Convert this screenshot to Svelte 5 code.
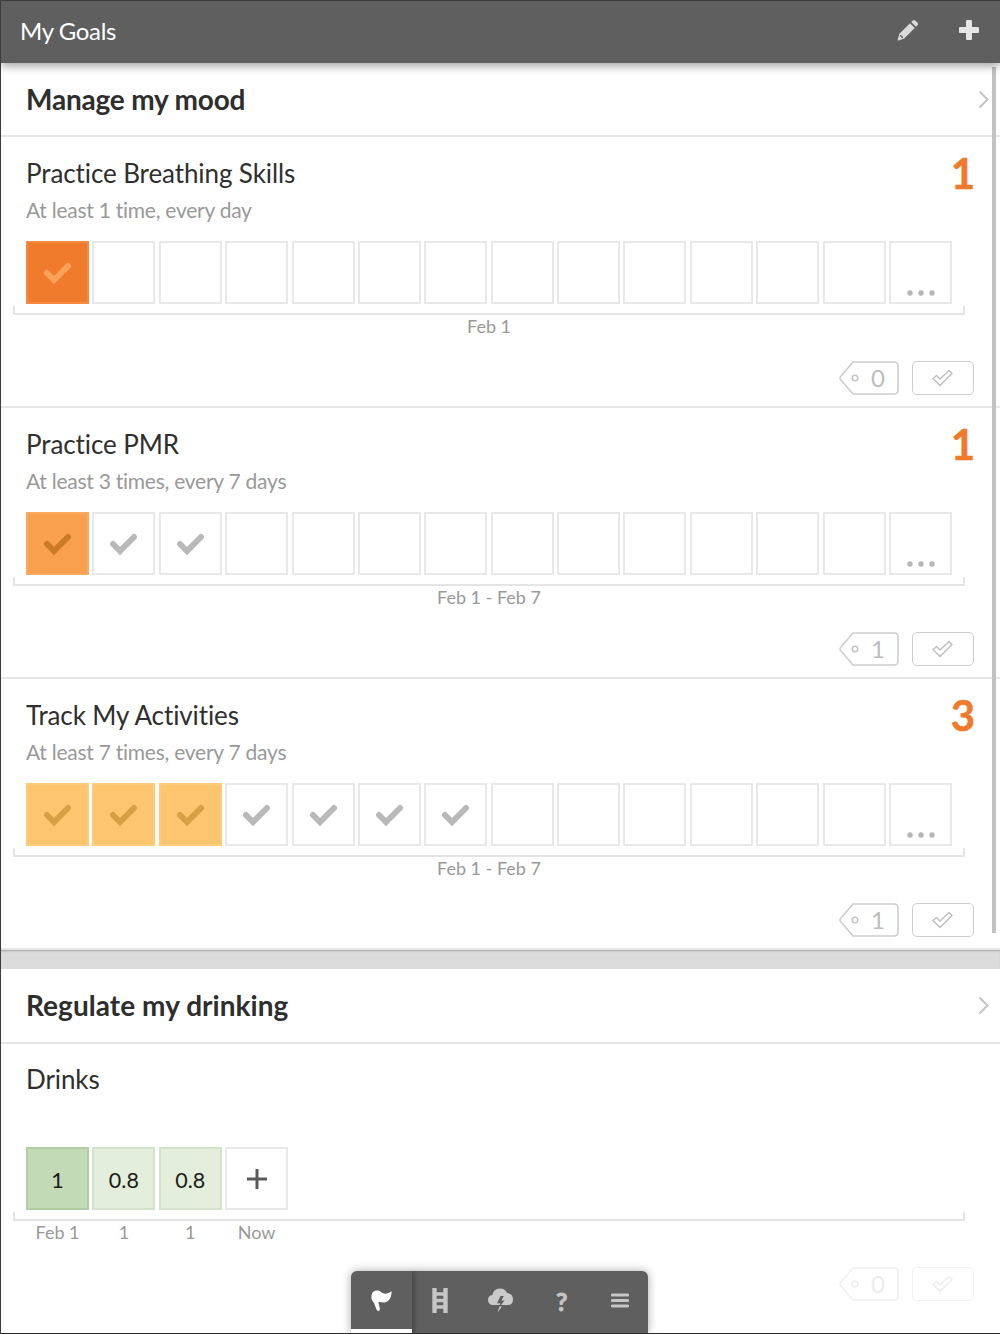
<script>
  const range = (n) => Array.from({ length: n });
  const goals = [
    { title: 'Practice Breathing Skills', sub: 'At least 1 time, every day', num: '1', range: 'Feb 1', tag: '0',
      cells: ['o1', ...range(12).map(() => ''), 'more'] },
    { title: 'Practice PMR', sub: 'At least 3 times, every 7 days', num: '1', range: 'Feb 1 - Feb 7', tag: '1',
      cells: ['o2', 'g', 'g', ...range(10).map(() => ''), 'more'] },
    { title: 'Track My Activities', sub: 'At least 7 times, every 7 days', num: '3', range: 'Feb 1 - Feb 7', tag: '1',
      cells: ['o3', 'o3', 'o3', 'g', 'g', 'g', 'g', ...range(6).map(() => ''), 'more'] }
  ];
  const drinks = [
    { v: '1', c: 'd1', l: 'Feb 1' },
    { v: '0.8', c: 'd2', l: '1' },
    { v: '0.8', c: 'd2', l: '1' },
    { v: '+', c: 'plus', l: 'Now' }
  ];
</script>

{#snippet chevron()}
  <svg class="chev" width="11" height="19" viewBox="0 0 11 19"><path d="M1.5 1.5 L9.5 9.5 L1.5 17.5" fill="none" stroke="#c4c4c4" stroke-width="2"/></svg>
{/snippet}

{#snippet actions(tag)}
  <div class="actions">
    <svg width="60" height="34" viewBox="0 0 60 34">
      <path d="M14 1 H55 Q59 1 59 5 V29 Q59 33 55 33 H14 L2 19 Q0 17 2 15 Z" fill="none" stroke="#cdcdcd" stroke-width="1.6"/>
      <circle cx="16" cy="17" r="2.8" fill="none" stroke="#c4c4c4" stroke-width="1.5"/>
      <text x="39" y="25.5" text-anchor="middle" class="tagnum">{tag}</text>
    </svg>
    <div class="okbtn">
      <svg width="21" height="18" viewBox="0 0 21 18"><path d="M1 9.5 L4.5 6.5 L8 10 L17 1.5 L20 4.5 L8 16.5 Z" fill="none" stroke="#c0c0c0" stroke-width="1.5" stroke-linejoin="round"/></svg>
    </div>
  </div>
{/snippet}

{#snippet cell(c)}
  <div class="cell {c}">
    {#if c === 'more'}
      <svg width="28" height="6" viewBox="0 0 28 6"><circle cx="3" cy="3" r="2.7"/><circle cx="14" cy="3" r="2.7"/><circle cx="25" cy="3" r="2.7"/></svg>
    {:else if c}
      <svg width="29" height="24" viewBox="0 0 29 24"><path d="M4 12 L11 19 L25 5" fill="none" stroke-width="6" stroke-linejoin="miter" stroke-linecap="round"/></svg>
    {/if}
  </div>
{/snippet}

<div class="app">
  <header class="top">
    <span class="top-title">My Goals</span>
    <div class="top-icons">
      <svg width="22" height="22" viewBox="0 0 22 22"><path d="M15.8 1.4 Q17 .5 18.2 1.4 L20.6 3.8 Q21.6 5 20.6 6.2 L19 7.8 L14.2 3 Z M13 4.2 L17.8 9 L7.2 19.6 L1.8 21.4 Q.5 21.7 .7 20.4 L2.4 14.8 Z" fill="#dadada"/><path d="M3.2 16.2 L5.8 18.8" stroke="#5f5f5f" stroke-width="1.3"/></svg>
      <svg width="20" height="20" viewBox="0 0 20 20"><path d="M10 2 V18 M2 10 H18" stroke="#e6e6e6" stroke-width="6" stroke-linecap="round"/></svg>
    </div>
  </header>

  <section class="sec">
    <div class="sec-head"><h2>Manage my mood</h2>{@render chevron()}</div>
    {#each goals as g}
      <article class="card">
        <div class="title-row">
          <h3>{g.title}</h3>
          <span class="num">{g.num}</span>
        </div>
        <p class="sub">{g.sub}</p>
        <div class="cells">
          {#each g.cells as c}{@render cell(c)}{/each}
        </div>
        <div class="axis"></div>
        <div class="range">{g.range}</div>
        {@render actions(g.tag)}
      </article>
    {/each}
  </section>

  <div class="band"></div>

  <section class="sec second">
    <div class="sec-head"><h2>Regulate my drinking</h2>{@render chevron()}</div>
    <article class="card">
      <div class="title-row"><h3>Drinks</h3></div>
      <p class="sub">&nbsp;</p>
      <div class="cells">
        {#each drinks as d}
          <div class="cell {d.c}">
            {#if d.c === 'plus'}
              <svg width="22" height="22" viewBox="0 0 22 22"><path d="M11 1 V21 M1 11 H21" stroke="#5a5a5a" stroke-width="3"/></svg>
            {:else}{d.v}{/if}
          </div>
        {/each}
      </div>
      <div class="axis"></div>
      <div class="cells labels">
        {#each drinks as d}<div class="lab">{d.l}</div>{/each}
      </div>
      <div class="faded">{@render actions('0')}</div>
    </article>
  </section>

  <div class="scrollbar"></div>

  <nav class="tabs">
    <div class="tab active">
      <svg width="21" height="21" viewBox="0 0 21 21"><path d="M.4 6 C1 .4 6.5 -.8 10 2 C13 4.4 16.5 4.2 20.6 1.2 C20.6 7.4 17.8 12.4 12.8 12.4 C10.8 12.4 9.4 11.8 7.4 12.2 L8.9 18.6 Q9.3 20.6 7.6 20.9 Q6 21.1 5.5 19.6 L3 13 Q-.2 10.4 .4 6 Z" fill="#fff"/></svg>
    </div>
    <div class="tab">
      <svg width="16" height="25" viewBox="0 0 16 25"><path d="M2.5 0 V25 M13.5 0 V25" stroke="#c6c6c6" stroke-width="4.4"/><path d="M3 6 H13 M3 12.5 H13 M3 19 H13" stroke="#c6c6c6" stroke-width="3.4"/></svg>
    </div>
    <div class="tab cloud">
      <svg width="25" height="25" viewBox="0 0 25 25"><path d="M5.5 17 Q0 17 0 11.8 Q0 7.5 4.4 7 Q5.5 .5 12 .5 Q17.2 .5 19 5 Q25 5.6 25 11.4 Q25 17 19.5 17 Z" fill="#cacaca"/><path d="M12.5 8 L9 15.2 H12.2 L11 19.5 L16.6 12.6 H13.4 L15.8 8 Z" fill="#5f5f5f"/><path d="M11.6 18.5 L10.6 21 L9.6 24.5 L14 18.5 Z" fill="#cacaca"/></svg>
    </div>
    <div class="tab q">?</div>
    <div class="tab menu">
      <svg width="18" height="15" viewBox="0 0 18 15"><path d="M1.2 2 H16.8 M1.2 7.5 H16.8 M1.2 13 H16.8" stroke="#c6c6c6" stroke-width="3" stroke-linecap="round"/></svg>
    </div>
  </nav>
</div>

<style>
  :global(body) { margin: 0; background: #fff; }
  .app {
    position: relative;
    width: 1000px;
    height: 1334px;
    box-sizing: border-box;
    overflow: hidden;
    background: #fff;
    border-left: 1px solid #3c3c3c;
    border-top: 1px solid #3c3c3c;
    border-bottom: 1px solid #2a2a2a;
    font-family: Lato, "Open Sans", sans-serif;
    color: #2f2f2f;
  }
  .top {
    position: relative;
    z-index: 2;
    height: 62px;
    box-sizing: border-box;
    background: #5f5f5f;
    display: flex;
    align-items: center;
    justify-content: space-between;
    padding: 0 21px 0 19px;
    box-shadow: 0 3px 9px rgba(0, 0, 0, .38);
  }
  .top-title { color: #fff; font-size: 24px; letter-spacing: -.37px; margin-top: -4px; }
  .top-icons { display: flex; align-items: center; gap: 40px; margin-top: -4px; }

  .sec-head {
    height: 72px;
    border-bottom: 2px solid #e6e6e6;
    display: flex;
    align-items: center;
    justify-content: space-between;
    padding: 0 11px 0 25px;
  }
  .second .sec-head { height: 73px; }
  h2 { margin: 0; font-size: 28px; font-weight: 700; color: #2e2e2e; letter-spacing: -.2px; }
  .second h2 { margin-top: -2px; letter-spacing: .05px; }

  .card {
    height: 271px;
    box-sizing: border-box;
    border-bottom: 2px solid #e6e6e6;
    padding: 0 26px 0 25px;
  }
  .second .card { border-bottom: 0; }
  .title-row {
    display: flex;
    justify-content: space-between;
    align-items: center;
    height: 36px;
    padding-top: 18px;
  }
  .second .title-row { padding-top: 17px; }
  .second .sub { margin-top: 6px; }
  h3 { margin: 0; font-size: 26px; font-weight: 400; color: #2f2f2f; line-height: 36px; letter-spacing: -.1px; }
  .num {
    font-size: 42px;
    font-weight: 700;
    color: #f07a2b;
    line-height: 36px;
    -webkit-text-stroke: .5px #f07a2b;
    margin-right: -1px;
  }
  .sub { margin: 5px 0 0; height: 28px; line-height: 28px; font-size: 21px; letter-spacing: -.25px; color: #999; }
  .cells {
    display: grid;
    grid-template-columns: repeat(14, 63px);
    column-gap: 3.38px;
    margin-top: 17px;
  }
  .cell {
    height: 63px;
    box-sizing: border-box;
    border: 2px solid #e8e8e8;
    display: flex;
    align-items: center;
    justify-content: center;
    font-size: 21.5px;
    color: #1c1c1c;
    background: #fff;
  }
  .cell svg path { stroke: #b9b9b9; }
  .o1 { background: #f07b2c; border-color: #f58a42; }
  .o2 { background: #f8a04e; border-color: #f9aa5e; }
  .o3 { background: #fdc56e; border-color: #fdcb7c; }
  .cell.o1 svg path { stroke: #fba25a; }
  .cell.o2 svg path { stroke: #cb7a25; }
  .cell.o3 svg path { stroke: #d8a044; }
  .more { align-items: flex-end; padding-bottom: 6px; }
  .more svg { margin-left: 1px; fill: #b6b6b6; }
  .d1 { background: #c3dab7; border-color: #b0cda4; padding-top: 2px; }
  .d2 { background: #e3eedb; border-color: #d2e3c9; padding-top: 2px; }
  .cell.plus svg path { stroke: #5a5a5a; }

  .second .cells { margin-top: 16px; }
  .axis {
    width: 948px;
    height: 7px;
    margin: 2px 0 0 -13px;
    border: 2px solid #e4e4e4;
    border-top: 0;
  }
  .range {
    width: 952px;
    margin: -1px 0 0 -13px;
    text-align: center;
    font-size: 18px;
    line-height: 24px;
    color: #999;
  }
  .second .labels { margin-top: -1px; }
  .lab { text-align: center; font-size: 18px; line-height: 24px; color: #999; }
  .actions {
    display: flex;
    justify-content: flex-end;
    align-items: center;
    gap: 13px;
    margin-top: 23px;
  }
  .tagnum { font-family: Lato, sans-serif; font-size: 24px; fill: #bdbdbd; }
  .okbtn {
    width: 62px;
    height: 34px;
    box-sizing: border-box;
    border: 1.6px solid #cdcdcd;
    border-radius: 5px;
    display: flex;
    align-items: center;
    justify-content: center;
    padding-right: 1px;
  }
  .faded { opacity: .28; }

  .band {
    height: 19px;
    background: #dcdcdc;
    box-shadow: inset 0 2px 2px -1px rgba(0, 0, 0, .28);
  }
  .scrollbar {
    position: absolute;
    left: 991px;
    top: 66px;
    width: 4px;
    height: 866px;
    background: #c2c2c2;
  }
  .tabs {
    position: absolute;
    left: 350px;
    top: 1270px;
    width: 297px;
    height: 63px;
    background: #5f5f5f;
    border-radius: 6px 6px 0 0;
    box-shadow: 0 0 10px rgba(0, 0, 0, .35);
    display: flex;
    overflow: hidden;
    z-index: 3;
  }
  .tab {
    flex: 1;
    display: flex;
    align-items: center;
    justify-content: center;
    padding-bottom: 4px;
    box-sizing: border-box;
    color: #c6c6c6;
  }
  .tab.active {
    flex: 0 0 61px;
    border-bottom: 5px solid #fff;
    padding-bottom: 0;
    box-shadow: 2px 0 5px rgba(0, 0, 0, .3);
  }
  .cloud { padding-left: 5px; }
  .menu { padding-left: 3px; }
  .q { font-size: 25px; font-weight: 700; -webkit-text-stroke: .8px #c6c6c6; padding-left: 6px; }
</style>
